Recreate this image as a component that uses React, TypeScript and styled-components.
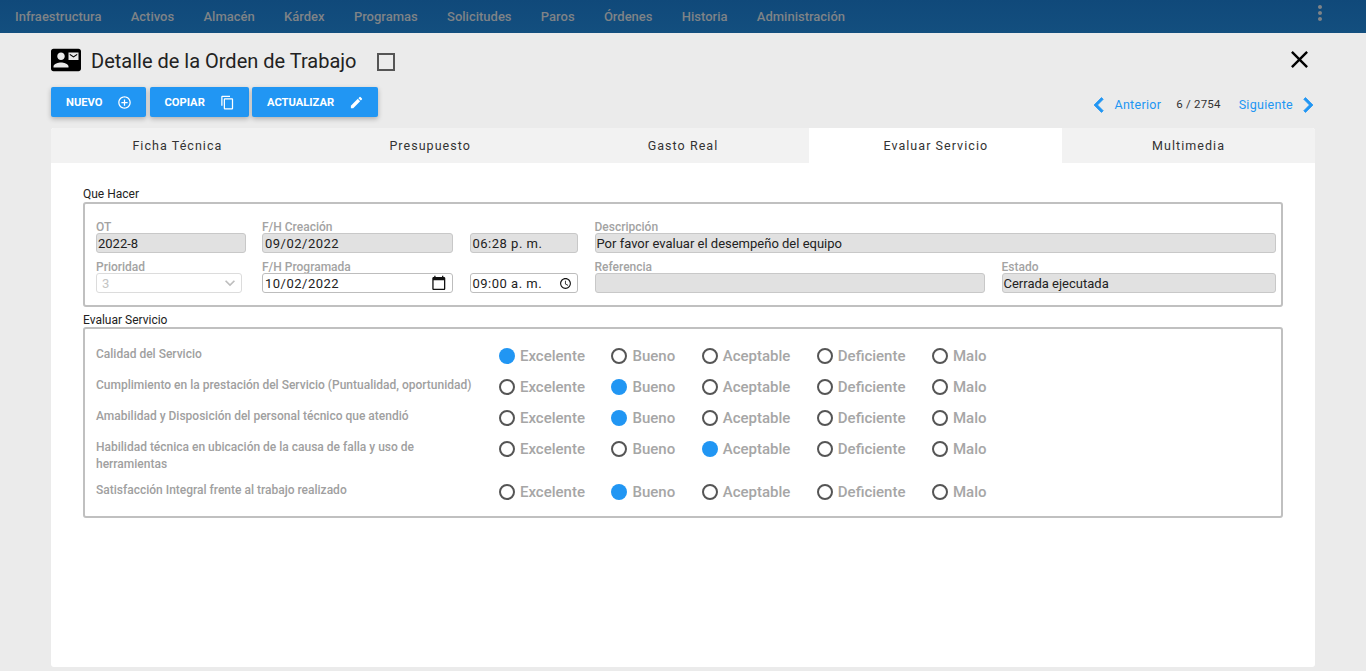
import styled, { createGlobalStyle } from "styled-components";
import {
  MdAccessTime,
  MdAddCircleOutline,
  MdCalendarToday,
  MdChevronLeft,
  MdChevronRight,
  MdClose,
  MdContactMail,
  MdContentCopy,
  MdEdit,
  MdKeyboardArrowDown,
  MdMoreVert,
} from "react-icons/md";

const GlobalStyle = createGlobalStyle`
  html, body {
    margin: 0;
    padding: 0;
    height: 100%;
    background: #ebebeb;
    font-family: Roboto, "Liberation Sans", sans-serif;
    overflow: hidden;
  }
`;

const navItems = ["Infraestructura", "Activos", "Almacén", "Kárdex", "Programas", "Solicitudes", "Paros", "Órdenes", "Historia", "Administración"];
const tabs = ["Ficha Técnica", "Presupuesto", "Gasto Real", "Evaluar Servicio", "Multimedia"];
const options = ["Excelente", "Bueno", "Aceptable", "Deficiente", "Malo"];
const questions = [
  { text: "Calidad del Servicio", selected: 0 },
  { text: "Cumplimiento en la prestación del Servicio (Puntualidad, oportunidad)", selected: 1 },
  { text: "Amabilidad y Disposición del personal técnico que atendió", selected: 1 },
  { text: "Habilidad técnica en ubicación de la causa de falla y uso de herramientas", selected: 2 },
  { text: "Satisfacción Integral frente al trabajo realizado", selected: 1 },
];

const Page = styled.div`
  width: 1366px;
  height: 671px;
  display: flex;
  flex-direction: column;
`;

const TopBar = styled.nav`
  height: 33px;
  flex: none;
  display: flex;
  align-items: center;
  gap: 29.3px;
  padding: 0 35px 0 15px;
  background: linear-gradient(#10497a, #134f7f);
`;

const NavItem = styled.span`
  font-size: 13px;
  font-weight: 500;
  color: #7f8387;
`;

const MoreButton = styled.span`
  margin-left: auto;
  display: flex;
  margin-top: -7px;
  color: #7f8387;
  font-size: 24px;
  margin-right: -1px;
`;

const Content = styled.main`
  flex: 1;
  padding: 0 51px 4px;
  display: flex;
  flex-direction: column;
`;

const TitleRow = styled.div`
  height: 54px;
  box-sizing: border-box;
  padding-top: 2px;
  display: flex;
  align-items: center;
  color: #000;
  > svg {
    margin-top: -2px;
  }
`;

const Title = styled.h1`
  margin: 0 21px 0 10px;
  font-size: 20px;
  font-weight: 400;
  color: #222;
`;

const CheckBox = styled.span`
  width: 14px;
  height: 14px;
  border: 2px solid #555;
  margin-top: 2px;
`;

const CloseButton = styled.span`
  margin-left: auto;
  display: flex;
  font-size: 29px;
  margin-right: 1px;
  margin-top: -3px;
`;

const ActionRow = styled.div`
  height: 30px;
  display: flex;
  align-items: center;
  gap: 3.5px;
`;

const ActionButton = styled.button<{ $w: number }>`
  height: 30px;
  border: 0;
  border-radius: 2px;
  padding: 0 14px 0 15px;
  display: flex;
  align-items: center;
  justify-content: space-between;
  width: ${(p) => p.$w}px;
  background: #2196f3;
  color: #fff;
  font-family: inherit;
  font-size: 11.2px;
  font-weight: 700;
  box-shadow: 0 2px 5px rgba(0, 0, 0, 0.25);
  svg {
    font-size: 15px;
  }
`;

const Pager = styled.div`
  margin-left: auto;
  display: flex;
  align-items: center;
  font-size: 12.5px;
  margin-top: 5px;
`;

const PagerLink = styled.span`
  display: flex;
  align-items: center;
  color: #2196f3;
  letter-spacing: 0.3px;
  svg {
    font-size: 30px;
  }
  svg path:not([fill="none"]) {
    stroke: currentColor;
    stroke-width: 0.6;
  }
  svg:last-child {
    margin: 0 -8px 0 0;
  }
`;

const PagerCount = styled.span`
  font-size: 11.5px;
  color: #333;
  margin: -1px 18px 0 15px;
  letter-spacing: 0.2px;
`;

const Card = styled.section`
  margin-top: 11px;
  flex: 1;
  background: #fff;
  border-radius: 3px;
  display: flex;
  flex-direction: column;
`;

const TabBar = styled.div`
  height: 35px;
  display: grid;
  grid-template-columns: repeat(5, 1fr);
  background: #f2f2f2;
  border-radius: 3px 3px 0 0;
`;

const Tab = styled.div<{ $active?: boolean }>`
  display: flex;
  align-items: center;
  justify-content: center;
  font-size: 12.5px;
  letter-spacing: 1.05px;
  color: #333;
  background: ${(p) => (p.$active ? "#fff" : "transparent")};
`;

const Body = styled.div`
  padding: 25px 32px 0;
`;

const GroupLabel = styled.div<{ $gap: number }>`
  font-size: 12px;
  line-height: 13px;
  color: #222;
  margin-bottom: ${(p) => p.$gap}px;
`;

const GroupBox = styled.div`
  border: 2px solid #c0c0c0;
  border-radius: 3px;
  margin-bottom: 7px;
`;

const InfoGrid = styled.div`
  display: grid;
  grid-template-columns: 149.5px 191px 108.5px 1fr;
  column-gap: 16.5px;
  padding: 16px 5px 5px 11px;
`;

const Field = styled.div`
  display: flex;
  flex-direction: column;
  min-width: 0;
  height: 40px;
`;

const FieldLabel = styled.label`
  font-size: 12px;
  font-weight: 500;
  line-height: 15px;
  height: 13px;
  color: #a3a3a3;
`;

const Input = styled.div<{ $disabled?: boolean; $spaced?: boolean }>`
  height: 20px;
  box-sizing: border-box;
  border: 1px solid ${(p) => (p.$disabled ? "#c8c8c8" : "#bdbdbd")};
  border-radius: 3px;
  background: ${(p) => (p.$disabled ? "#e1e1e1" : "#fff")};
  padding: 0 2px 0 ${(p) => (p.$spaced ? 2 : 1)}px;
  font-size: 13px;
  letter-spacing: ${(p) => (p.$spaced ? 0.5 : 0)}px;
  color: #222;
  display: flex;
  align-items: center;
  justify-content: space-between;
  white-space: nowrap;
`;

const CalendarIcon = styled(MdCalendarToday)`
  font-size: 15.6px;
  color: #111;
  margin-right: 3px;
`;

const ClockIcon = styled(MdAccessTime)`
  font-size: 13px;
  color: #111;
  margin-right: 3.5px;
`;

const SelectBox = styled(Input)`
  width: 146px;
  color: #c4c4c4;
  background: #fff;
  border-color: #dcdcdc;
  padding: 0 1px 0 5px;
  svg {
    color: #bdbdbd;
    font-size: 20px;
  }
`;

const SplitRow = styled.div`
  display: grid;
  grid-template-columns: 390px 1fr;
  column-gap: 17px;
`;

const Questions = styled.div`
  padding: 14px 0 12px 11px;
`;

const QuestionRow = styled.div`
  display: flex;
  align-items: flex-start;
  padding-bottom: 6px;
  &:last-child {
    padding-bottom: 0;
  }
`;

const QuestionText = styled.div`
  width: 403px;
  flex: none;
  font-size: 12px;
  font-weight: 500;
  line-height: 17px;
  color: #a0a0a0;
  padding: 3px 20px 0 0;
  box-sizing: border-box;
`;

const Options = styled.div`
  display: flex;
  height: 25px;
  align-items: center;
  gap: 26.5px;
`;

const Option = styled.span`
  display: flex;
  align-items: center;
  gap: 5px;
  font-size: 15px;
  font-weight: 500;
  color: #a6a6a6;
`;

const Radio = styled.span<{ $checked: boolean }>`
  width: 16px;
  height: 16px;
  box-sizing: border-box;
  border-radius: 50%;
  border: ${(p) => (p.$checked ? "none" : "2px solid #555")};
  background: ${(p) => (p.$checked ? "#2196f3" : "#fff")};
`;

export default function App() {
  return (
    <>
      <GlobalStyle />
      <Page>
        <TopBar>
          {navItems.map((item) => (
            <NavItem key={item}>{item}</NavItem>
          ))}
          <MoreButton>
            <MdMoreVert />
          </MoreButton>
        </TopBar>
        <Content>
          <TitleRow>
            <MdContactMail size={30} />
            <Title>Detalle de la Orden de Trabajo</Title>
            <CheckBox />
            <CloseButton>
              <MdClose />
            </CloseButton>
          </TitleRow>
          <ActionRow>
            <ActionButton $w={95}>
              NUEVO <MdAddCircleOutline />
            </ActionButton>
            <ActionButton $w={99}>
              COPIAR <MdContentCopy />
            </ActionButton>
            <ActionButton $w={126}>
              ACTUALIZAR <MdEdit />
            </ActionButton>
            <Pager>
              <PagerLink>
                <MdChevronLeft />
                <span>Anterior</span>
              </PagerLink>
              <PagerCount>6 / 2754</PagerCount>
              <PagerLink>
                <span>Siguiente</span>
                <MdChevronRight />
              </PagerLink>
            </Pager>
          </ActionRow>
          <Card>
            <TabBar>
              {tabs.map((tab) => (
                <Tab key={tab} $active={tab === "Evaluar Servicio"}>
                  {tab}
                </Tab>
              ))}
            </TabBar>
            <Body>
              <GroupLabel $gap={1}>Que Hacer</GroupLabel>
              <GroupBox>
                <InfoGrid>
                  <Field>
                    <FieldLabel>OT</FieldLabel>
                    <Input $disabled>2022-8</Input>
                  </Field>
                  <Field>
                    <FieldLabel>F/H Creación</FieldLabel>
                    <Input $disabled $spaced>09/02/2022</Input>
                  </Field>
                  <Field>
                    <FieldLabel>&nbsp;</FieldLabel>
                    <Input $disabled $spaced>06:28 p. m.</Input>
                  </Field>
                  <Field>
                    <FieldLabel>Descripción</FieldLabel>
                    <Input $disabled>Por favor evaluar el desempeño del equipo</Input>
                  </Field>
                  <Field>
                    <FieldLabel>Prioridad</FieldLabel>
                    <SelectBox>
                      3 <MdKeyboardArrowDown />
                    </SelectBox>
                  </Field>
                  <Field>
                    <FieldLabel>F/H Programada</FieldLabel>
                    <Input $spaced>
                      10/02/2022 <CalendarIcon />
                    </Input>
                  </Field>
                  <Field>
                    <FieldLabel>&nbsp;</FieldLabel>
                    <Input $spaced>
                      09:00 a. m. <ClockIcon />
                    </Input>
                  </Field>
                  <SplitRow>
                    <Field>
                      <FieldLabel>Referencia</FieldLabel>
                      <Input $disabled />
                    </Field>
                    <Field>
                      <FieldLabel>Estado</FieldLabel>
                      <Input $disabled>Cerrada ejecutada</Input>
                    </Field>
                  </SplitRow>
                </InfoGrid>
              </GroupBox>
              <GroupLabel $gap={0}>Evaluar Servicio</GroupLabel>
              <GroupBox>
                <Questions>
                  {questions.map((q) => (
                    <QuestionRow key={q.text}>
                      <QuestionText>{q.text}</QuestionText>
                      <Options>
                        {options.map((opt, i) => (
                          <Option key={opt}>
                            <Radio $checked={i === q.selected} />
                            {opt}
                          </Option>
                        ))}
                      </Options>
                    </QuestionRow>
                  ))}
                </Questions>
              </GroupBox>
            </Body>
          </Card>
        </Content>
      </Page>
    </>
  );
}
